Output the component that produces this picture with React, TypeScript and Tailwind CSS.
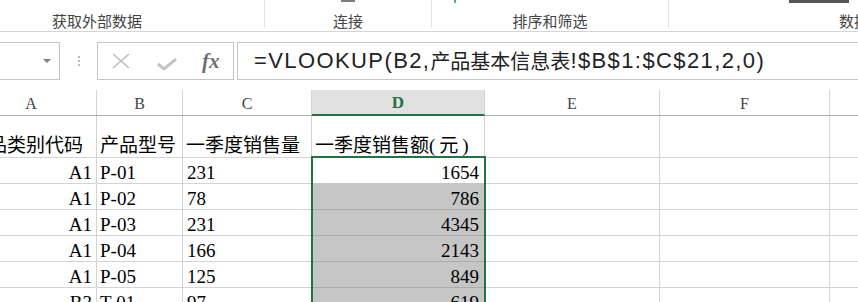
import React from "react";

const cols = [
    { key: "A", w: "w-[131px]" },
    { key: "B", w: "w-[86px]" },
    { key: "C", w: "w-[129px]" },
    { key: "D", w: "w-[173px]" },
    { key: "E", w: "w-[175px]" },
    { key: "F", w: "w-[170px]" },
    { key: "G", w: "w-[200px]" },
];

const rows = [
    { a: "A1", b: "P-01", c: "231", d: "1654" },
    { a: "A1", b: "P-02", c: "78", d: "786" },
    { a: "A1", b: "P-03", c: "231", d: "4345" },
    { a: "A1", b: "P-04", c: "166", d: "2143" },
    { a: "A1", b: "P-05", c: "125", d: "849" },
    { a: "B3", b: "T-01", c: "97", d: "619" },
];

const cellFont = { fontFamily: '"Liberation Serif", "Noto Sans CJK SC", serif' };
const latin = { fontFamily: '"Liberation Sans", "Noto Sans CJK SC", sans-serif' };

function RibbonLabels() {
    return (
        <div className="h-[32px] border-b border-[#d5d5d5] overflow-hidden">
            <div className="flex -ml-[70px] h-[28px] text-[15px] leading-[15px] text-[#444]">
                <div className="w-[335px] shrink-0 border-r border-[#e3e3e3] flex items-end justify-center">
                    获取外部数据
                </div>
                <div className="w-[167px] shrink-0 border-r border-[#e3e3e3] flex flex-col items-center justify-between">
                    <div className="w-[14px] h-[2px] bg-[#7a7a7a]" />
                    <span>连接</span>
                </div>
                <div className="w-[237px] shrink-0 border-r border-[#e3e3e3] flex flex-col items-center justify-between">
                    <div className="self-start ml-[22px] w-[2px] h-[3px] bg-[#5b9bd5]" />
                    <span>排序和筛选</span>
                </div>
                <div className="w-[220px] shrink-0 flex flex-col justify-between">
                    <div className="ml-[120px] w-[60px] h-[3px] bg-[#555]" />
                    <span className="ml-[170px]">数据</span>
                </div>
            </div>
        </div>
    );
}

function FormulaBar() {
    return (
        <div className="mt-[10px] h-[38px] flex items-stretch">
            <div className="w-[61px] -ml-[1px] border border-[#c6c6c6] flex items-center justify-end pr-[8px]">
                <svg width="8" height="4" viewBox="0 0 8 4">
                    <path d="M0 0 L8 0 L4 4 Z" fill="#808080" />
                </svg>
            </div>
            <div className="w-[37px] flex flex-col items-center justify-center gap-[2px]">
                <div className="w-[2px] h-[2px] bg-[#bdbdbd]" />
                <div className="w-[2px] h-[2px] bg-[#bdbdbd]" />
                <div className="w-[2px] h-[2px] bg-[#bdbdbd]" />
            </div>
            <div className="w-[137px] border border-[#c6c6c6] flex items-center">
                <svg width="18" height="16" viewBox="0 0 18 16" className="ml-[14px]">
                    <path d="M1 1 L17 15 M17 1 L1 15" stroke="#bdbdbd" strokeWidth="1.6" fill="none" />
                </svg>
                <svg width="20" height="12" viewBox="0 0 20 12" className="ml-[27px] mt-[6px]">
                    <path d="M1 6 L7 11 L19 1" stroke="#c4c4c4" strokeWidth="3" fill="none" />
                </svg>
                <span
                    className="ml-[25px] text-[21px] italic font-bold text-[#6f6f6f] leading-none"
                    style={{ fontFamily: '"Liberation Serif", serif' }}
                >
                    fx
                </span>
            </div>
            <div className="ml-[3px] flex-1 border border-r-0 border-[#c6c6c6] flex items-center pl-[16px] whitespace-nowrap">
                <span className="text-[22px] tracking-[1.4px] text-[#222] leading-none" style={latin}>
                    =VLOOKUP(B2,
                </span>
                <span
                    className="text-[20px] text-[#222] leading-none"
                    style={{ fontFamily: '"Noto Sans CJK SC", sans-serif' }}
                >
                    产品基本信息表
                </span>
                <span className="text-[22px] tracking-[1.4px] text-[#222] leading-none" style={latin}>
                    !$B$1:$C$21,2,0)
                </span>
            </div>
        </div>
    );
}

function HeaderRow() {
    return (
        <div className="flex h-[26px] border-b border-[#ababab]">
            {cols.map((c) =>
                c.key === "D" ? (
                    <div
                        key={c.key}
                        className={`${c.w} shrink-0 bg-[#e1e1e1] border-r border-[#d4d4d4] border-b-2 border-b-[#217346] -mb-[1px] flex items-center justify-center pt-[2px] text-[17px] font-bold text-[#217346]`}
                    >
                        {c.key}
                    </div>
                ) : (
                    <div
                        key={c.key}
                        className={`${c.w} shrink-0 border-r border-[#d4d4d4] flex items-center justify-center pt-[2px] text-[16px] text-[#444]`}
                    >
                        {c.key}
                    </div>
                )
            )}
        </div>
    );
}

function TitleRow() {
    const titles = ["产品类别代码", "产品型号", "一季度销售量", "一季度销售额", "", "", ""];
    return (
        <div className="flex h-[42px] border-b border-[#d4d4d4] text-[19px] leading-[22px] text-black">
            {cols.map((c, i) => (
                <div
                    key={c.key}
                    className={`${c.w} shrink-0 border-r border-[#d4d4d4] flex items-end pl-[3px] overflow-hidden whitespace-nowrap`}
                >
                    {titles[i]}
                    {c.key === "D" && <span className="tracking-[4px]">(元)</span>}
                </div>
            ))}
        </div>
    );
}

function DataRow({ r, first }: { r: (typeof rows)[number]; first: boolean }) {
    return (
        <div className="flex h-[26px] text-[19px] text-black">
            <div className="w-[131px] shrink-0 border-r border-b border-[#d4d4d4] flex items-end justify-end pr-[4px] leading-[21px]">
                {r.a}
            </div>
            <div className="w-[86px] shrink-0 border-r border-b border-[#d4d4d4] flex items-end pl-[3px] leading-[21px]">
                {r.b}
            </div>
            <div className="w-[129px] shrink-0 border-r border-b border-[#d4d4d4] flex items-end pl-[4px] leading-[21px]">
                {r.c}
            </div>
            <div
                className={`w-[173px] shrink-0 border-r border-b flex items-end justify-end pr-[5px] leading-[21px] ${
                    first ? "bg-white border-[#c6c6c6]" : "bg-[#c6c6c6] border-[#ababab]"
                }`}
            >
                {r.d}
            </div>
            <div className="w-[175px] shrink-0 border-r border-b border-[#d4d4d4]" />
            <div className="w-[170px] shrink-0 border-r border-b border-[#d4d4d4]" />
            <div className="w-[200px] shrink-0 border-b border-[#d4d4d4]" />
        </div>
    );
}

export default function App() {
    return (
        <div
            className="w-[858px] h-[302px] overflow-hidden bg-white relative"
            style={{ fontFamily: '"Noto Sans CJK SC", "Noto Sans", sans-serif' }}
        >
            <RibbonLabels />
            <FormulaBar />
            <div className="mt-[10px] -ml-[34px]" style={cellFont}>
                <HeaderRow />
                <TitleRow />
                {rows.map((r, i) => (
                    <DataRow key={i} r={r} first={i === 0} />
                ))}
            </div>
            {/* selection outline D2:D… */}
            <div className="absolute left-[311px] top-[156px] w-[175px] h-[200px] border-2 border-[#217346] pointer-events-none" />
        </div>
    );
}
